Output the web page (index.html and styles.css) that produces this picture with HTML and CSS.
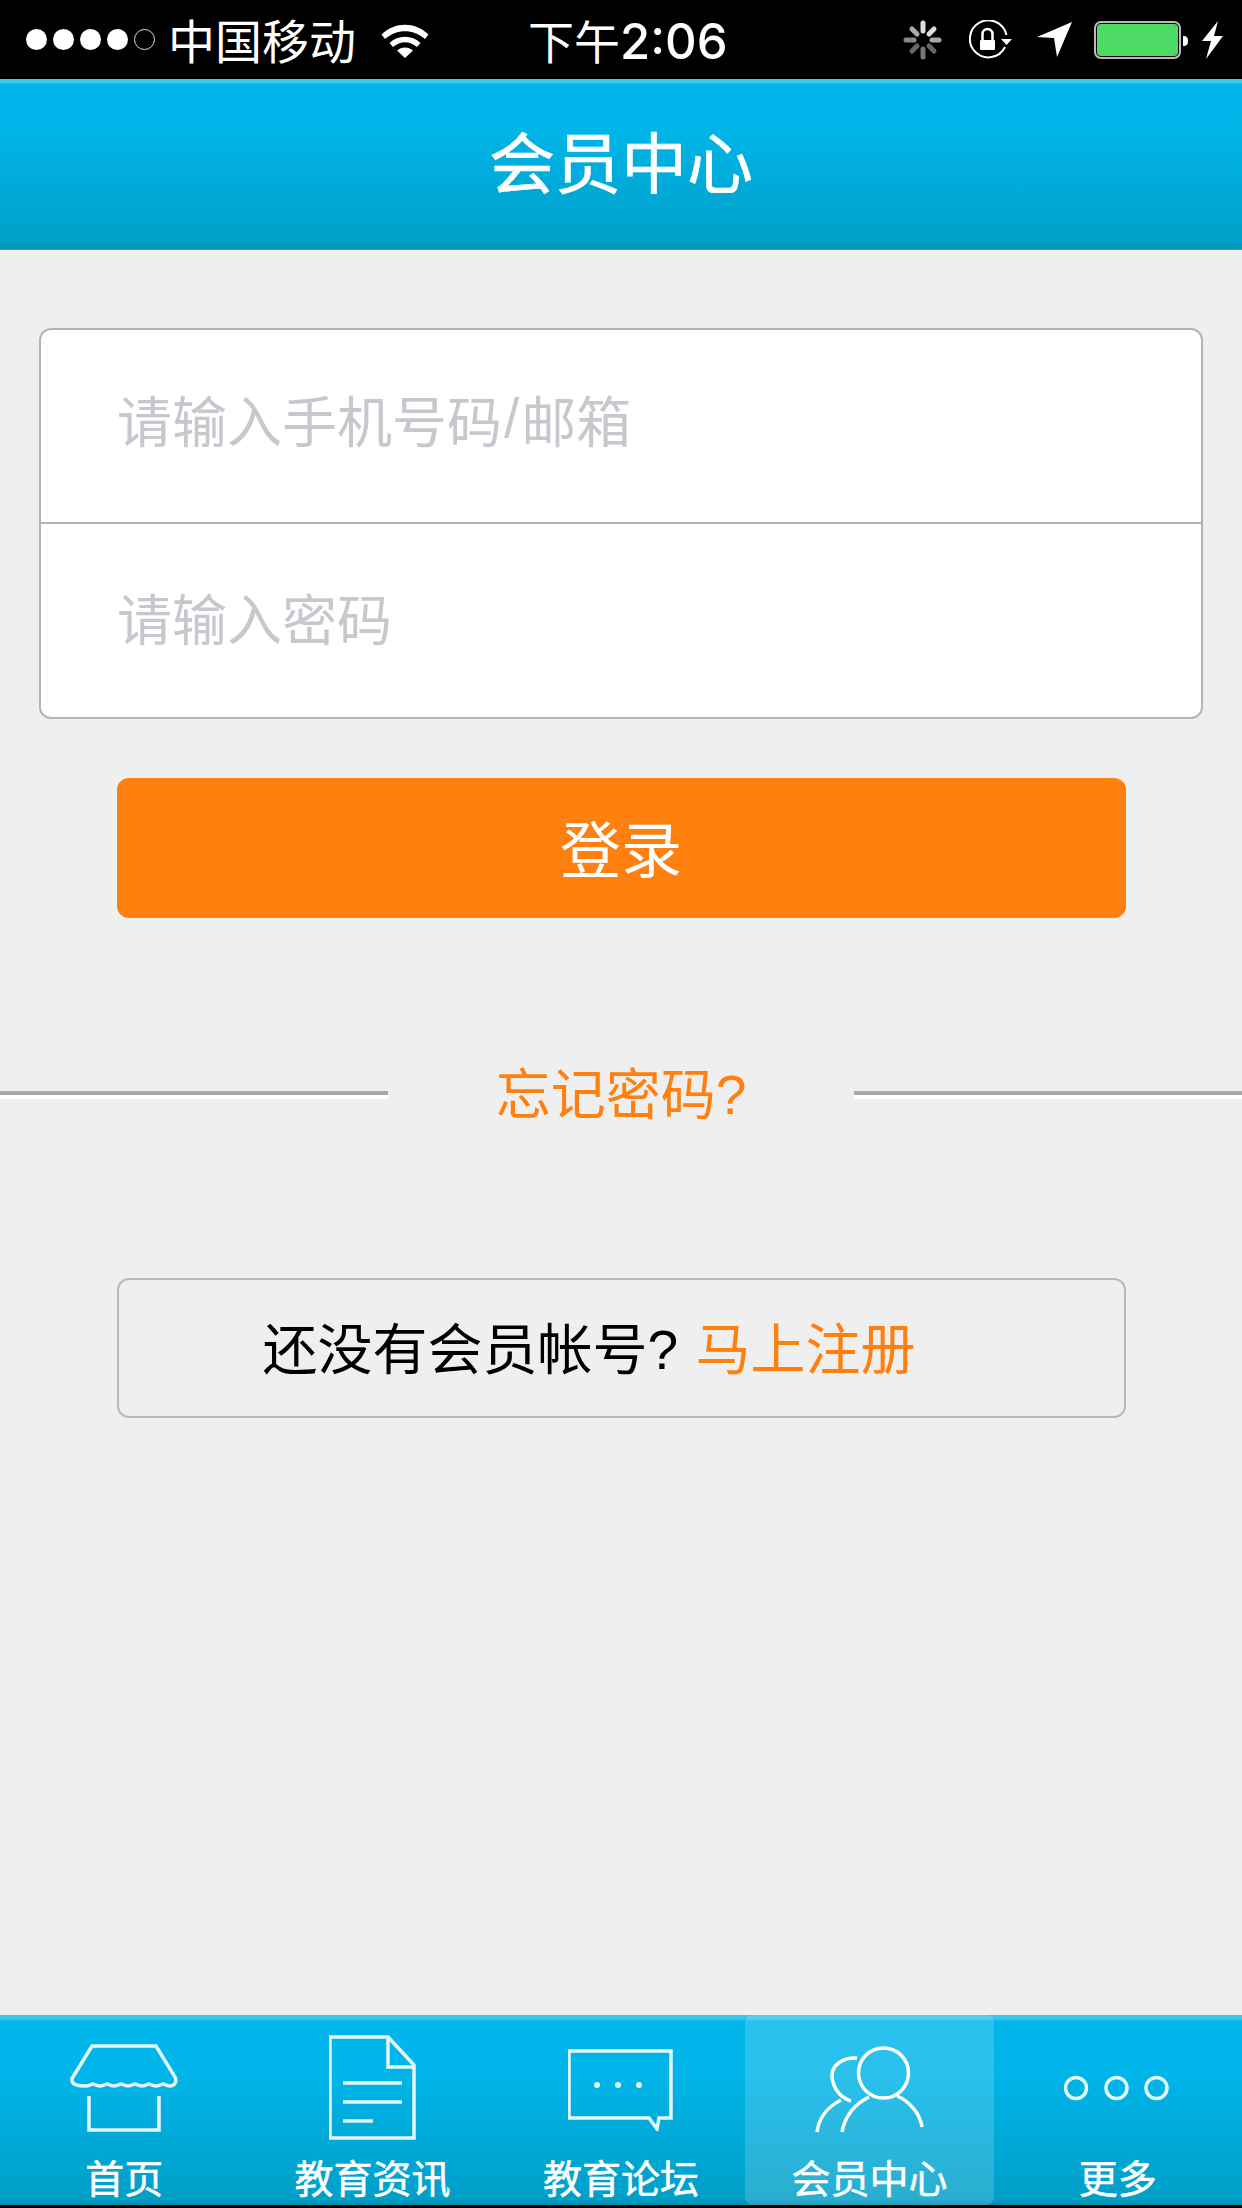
FILE: index.html
```html
<!DOCTYPE html>
<html lang="zh">
<head>
<meta charset="utf-8">
<title>会员中心</title>
<link rel="stylesheet" href="styles.css">
</head>
<body>
<div class="page">
  <div class="status">
    <div class="signal"><i class="dot"></i><i class="dot"></i><i class="dot"></i><i class="dot"></i><i class="dot empty"></i></div>
    <span class="carrier">中国移动</span>
    <svg class="wifi" width="48" height="34" viewBox="0 0 48 34"><path d="M0.500 10.500C14 -2.500 34 -2.500 47.500 10.500L44 15C32 4.500 16 4.500 4 15Z" fill="#fff"/><path d="M8.500 19C17 10.500 31 10.500 39.500 19L36 23C28.500 16.500 19.500 16.500 12 23Z" fill="#fff"/><path d="M16 26.500C20.500 22.500 27.500 22.500 32 26.500L24 34Z" fill="#fff"/></svg>
    <span class="time"><span class="time-cjk">下午</span>2:06</span>
    <div class="status-right">
      <svg class="spin" width="40" height="40" viewBox="0 0 40 40" stroke-width="5" stroke-linecap="round"><path d="M20 3V11" stroke="#ddd"/><path d="M31 9L26 14" stroke="#ddd"/><path d="M36 20H29" stroke="#aaa"/><path d="M31 31L26 26" stroke="#666"/><path d="M20 37V29" stroke="#777"/><path d="M9 31L14 26" stroke="#666"/><path d="M3 20H11" stroke="#888"/><path d="M9 9L14 14" stroke="#aaa"/></svg>
      <svg class="rot" width="44" height="40" viewBox="0 0 44 40"><path d="M36 27A18.500 18.500 0 1 1 37.500 15" fill="none" stroke="#fff" stroke-width="2"/><path d="M32 19H43L37.500 25Z" fill="#fff"/><rect x="11" y="20" width="15" height="10" rx="1" fill="#fff"/><path d="M13.500 20V14A5 5 0 0 1 23.500 14V20" fill="none" stroke="#fff" stroke-width="2.500"/></svg>
      <svg class="arrow" width="35" height="35" viewBox="0 0 35 35"><path d="M0 15L35 0L20 35L17 16Z" fill="#fff"/></svg>
      <svg class="batt" width="95" height="38" viewBox="0 0 95 38"><rect x="1" y="1" width="85" height="36" rx="6" fill="#000" stroke="#bbb" stroke-width="2"/><rect x="3" y="3" width="81" height="32" rx="4" fill="#4cd964"/><path d="M89 15C93 15 94 17 94 20C94 23 93 25 89 25Z" fill="#fff"/></svg>
      <svg class="bolt" width="21" height="38" viewBox="0 0 21 38"><path d="M16 0L0 20H9L4 38L21 15H12Z" fill="#fff"/></svg>
    </div>
  </div>

  <header class="topbar">会员中心</header>

  <main class="main">
    <section class="card">
      <div class="field field-first">请输入手机号码<span class="slash">/</span>邮箱</div>
      <div class="field">请输入密码</div>
    </section>
    <div class="login">登录</div>
    <div class="forgot">
      <span class="rule"></span>
      <span class="forgot-text">忘记密码?</span>
      <span class="rule"></span>
    </div>
    <div class="register">还没有会员帐号? <span class="orange">马上注册</span></div>
  </main>

  <nav class="tabs">
    <div class="tab">
      <svg class="tab-icon" width="108" height="90" viewBox="0 0 108 90" fill="none" stroke="#e4f7fd" stroke-width="3.500"><path d="M22 3H86L105 34C107 38 105 43 100 43C96 43 95 41 93 41C91 41 90 43 86 43C82 43 81 41 79 41C77 41 76 43 72 43C68 43 67 41 65 41C63 41 62 43 58 43C54 43 53 41 51 41C49 41 48 43 44 43C40 43 39 41 37 41C35 41 34 43 30 43C26 43 25 41 23 41C21 41 20 43 16 43C11 43 1 43 2 36C2 35 3 34 3 34Z"/><path d="M19 53V87H89V53"/></svg>
      <span class="tab-label">首页</span>
    </div>
    <div class="tab">
      <svg class="tab-icon" width="88" height="106" viewBox="1 0 88 106" fill="none" stroke="#e4f7fd" stroke-width="3.500"><path d="M2 2H60L86 30V103H2Z"/><path d="M60 2V32H86"/><path d="M15 48H74M15 67H74M15 86H45"/></svg>
      <span class="tab-label">教育资讯</span>
    </div>
    <div class="tab">
      <svg class="tab-icon" width="106" height="86" viewBox="1 -4 106 86" fill="none" stroke="#e4f7fd" stroke-width="3.500"><path d="M2 2H104V69H92L90 80L82 69H2Z"/><circle cx="30" cy="36" r="3" fill="#e4f7fd" stroke="none"/><circle cx="51" cy="36" r="3" fill="#e4f7fd" stroke="none"/><circle cx="72" cy="36" r="3" fill="#e4f7fd" stroke="none"/></svg>
      <span class="tab-label">教育论坛</span>
    </div>
    <div class="tab active">
      <svg class="tab-icon" width="110" height="92" viewBox="-1 -4 110 92" fill="none" stroke="#fff" stroke-width="3.500"><circle cx="68.500" cy="27" r="25"/><path d="M42 12C27 11 17 20 17 29C17 39 23 51 36 55"/><path d="M2 86C4 71 14 60 26 54"/><path d="M27 86C30 70 40 58 54 51"/><path d="M82 50C94 55 105 67 107 81"/></svg>
      <span class="tab-label">会员中心</span>
    </div>
    <div class="tab">
      <svg class="tab-icon" width="108" height="26" viewBox="0.500 0 108 26" fill="none" stroke="#e4f7fd" stroke-width="3.500"><circle cx="12.500" cy="13" r="10.500"/><circle cx="53" cy="13" r="10.500"/><circle cx="93" cy="13" r="10.500"/></svg>
      <span class="tab-label">更多</span>
    </div>
  </nav>
</div>
</body>
</html>
```

FILE: styles.css
```css
* { box-sizing: border-box; }
html, body { margin: 0; padding: 0; }
body {
  font-family: "Liberation Sans", "Noto Sans CJK SC", sans-serif;
  background: #efefef;
}
.page {
  width: 1242px;
  height: 2208px;
  display: flex;
  flex-direction: column;
  overflow: hidden;
  background: #efefef;
}

/* status bar */
.status {
  height: 79px;
  flex: none;
  background: #000;
  color: #fff;
  display: flex;
  align-items: center;
  padding-left: 26px;
}
.signal { display: flex; gap: 6px; }
.dot { width: 21px; height: 21px; border-radius: 50%; background: #fff; display: block; }
.dot.empty { background: none; border: 1px solid #ddd; }
.carrier { font-size: 47px; margin-left: 13px; line-height: 79px; padding-top: 3px; height: 79px; }
.wifi { margin-left: 25px; margin-top: 2px; }
.time {
  font-family: Inter, "Noto Sans CJK SC", sans-serif;
  font-size: 49px;
  font-weight: 500;
  margin-left: 99px;
  line-height: 79px;
  height: 79px;
  padding-top: 2px;
}
.time-cjk { font-size: 46px; font-weight: 400; }
.status-right {
  margin-left: auto;
  padding-right: 19px;
  display: flex;
  align-items: center;
}
.spin { margin-right: 26px; }
.rot { margin-right: 24px; }
.arrow { margin-right: 22px; }
.batt { margin-right: 13px; }

/* title bar */
.topbar {
  height: 171px;
  flex: none;
  color: #fff;
  font-size: 66px;
  -webkit-text-stroke: 0.7px #fff;
  padding-bottom: 12px;
  display: flex;
  align-items: center;
  justify-content: center;
  background: linear-gradient(#3cc8ef 0, #3cc8ef 4px, #00b7ec 5px, #00b5e8 30%, #00a0c9 95%, #008fb3 99%, #6f9aa6 100%);
}

/* main */
.main {
  flex: 1;
  display: flex;
  flex-direction: column;
  align-items: center;
}
.card {
  margin-top: 78px;
  width: 1164px;
  height: 391px;
  background: #fff;
  border: 2px solid #b4b4b4;
  border-radius: 12px;
  display: flex;
  flex-direction: column;
}
.field {
  flex: 1;
  display: flex;
  align-items: center;
  padding: 0 0 9px 76px;
  font-size: 55px;
  color: #c7c7cd;
}
.field-first { flex: none; height: 192px; padding-bottom: 16px; }
.field + .field { border-top: 2px solid #b4b4b4; }
.slash { margin: 0 2px; }
.login {
  margin-top: 59px;
  width: 1009px;
  height: 140px;
  padding-bottom: 4px;
  background: #ff7f0f;
  border-radius: 12px;
  color: #fff;
  font-size: 61px;
  display: flex;
  align-items: center;
  justify-content: center;
}
.forgot {
  margin-top: 137px;
  width: 100%;
  height: 80px;
  display: flex;
  align-items: center;
}
.rule {
  flex: 1;
  height: 8px;
  background: linear-gradient(#a9a9a9 0, #a9a9a9 4px, #fff 4px);
}
.forgot-text {
  width: 466px;
  text-align: center;
  font-size: 55px;
  color: #ff7f0f;
  padding-bottom: 10px;
}
.register {
  margin-top: 143px;
  width: 1009px;
  height: 140px;
  border: 2px solid #b9b9b9;
  border-radius: 12px;
  padding: 0 64px 6px 0;
  font-size: 55px;
  color: #000;
  display: flex;
  align-items: center;
  justify-content: center;
  white-space: pre;
}
.orange { color: #ff7f0f; margin-left: 2px; }

/* tab bar */
.tabs {
  height: 193px;
  flex: none;
  display: grid;
  grid-template-columns: repeat(5, 1fr);
  border-bottom: 3px solid #000;
  background: linear-gradient(#39c6ee 0, #39c6ee 4px, #00b7ec 6px, #00b5e9 30%, #009fc8 97%, #008aa8 100%);
}
.tab {
  position: relative;
  display: flex;
  flex-direction: column;
  align-items: center;
  padding-top: 10px;
}
.tab.active {
  background: rgba(255, 255, 255, 0.16);
  border-radius: 8px;
}
.tab-icon { margin-top: auto; margin-bottom: auto; }
.tab-label {
  flex: none;
  height: 55px;
  line-height: 60px;
  font-size: 39px;
  -webkit-text-stroke: 0.5px #fff;
  color: #fff;
}
```
